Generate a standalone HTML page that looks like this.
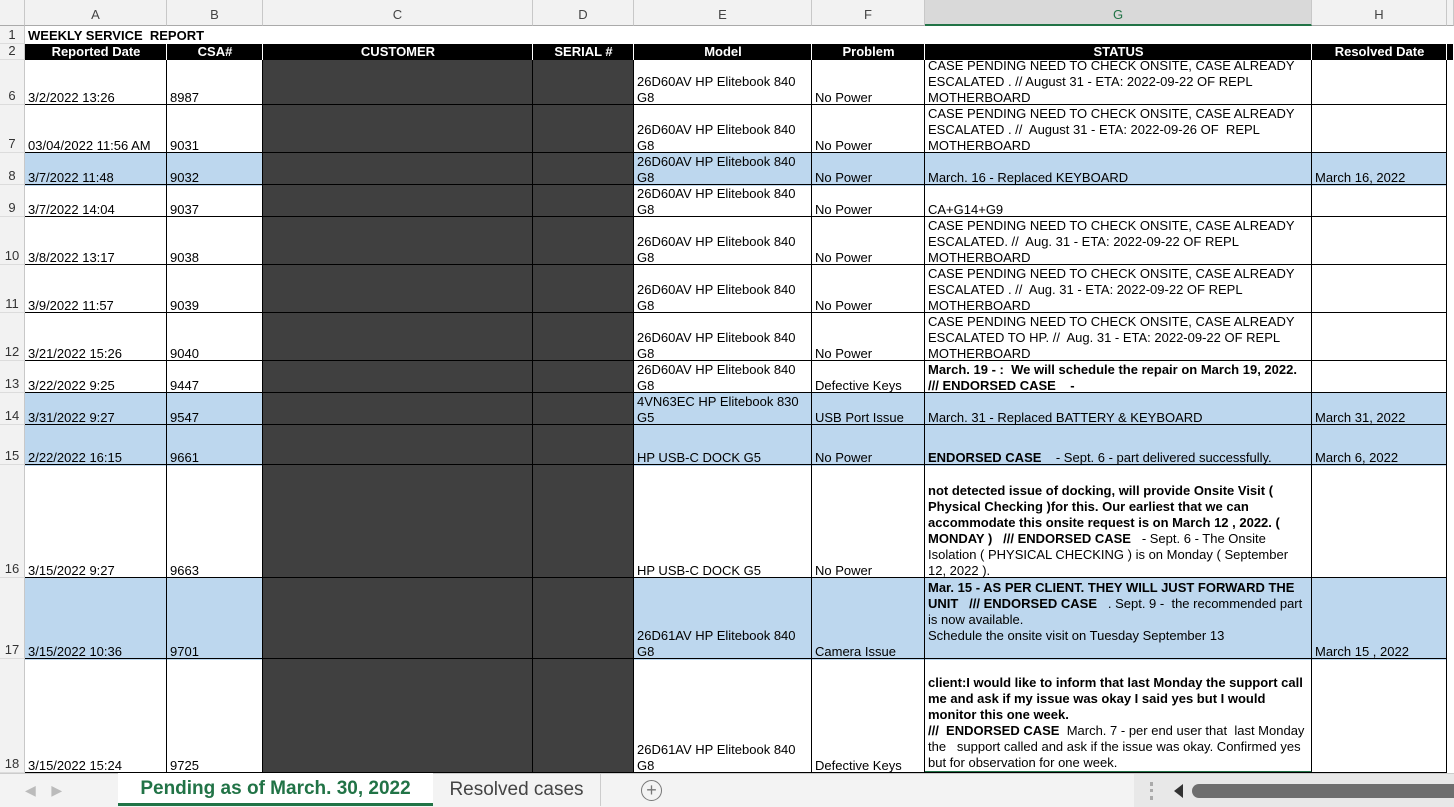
<!DOCTYPE html>
<html><head><meta charset="utf-8"><style>
*{margin:0;padding:0;box-sizing:border-box}
body{width:1454px;height:807px;overflow:hidden;background:#fff;font-family:"Liberation Sans",Arial,sans-serif;font-size:13px;color:#000;position:relative}
.r{position:absolute;left:0;width:1454px}
.r::after{content:"";position:absolute;left:25px;width:1422px;bottom:0;height:1px;background:#000;z-index:2}
.c{position:absolute;top:0;bottom:-1px;display:flex;align-items:flex-end;padding:0 2px 0 3px;line-height:16px;overflow:hidden;border-right:1px solid #000}
.n{left:0;width:25px;bottom:0;background:#f2f2f2;border-right:1px solid #c8c8c8;border-bottom:1px solid #dcdcdc;justify-content:center;color:#333;padding:0;z-index:3}
.A{left:25px;width:142px}.B{left:167px;width:96px}.C{left:263px;width:270px;background:#404040}.D{left:533px;width:101px;background:#404040}
.E{left:634px;width:178px}.F{left:812px;width:113px}.G{left:925px;width:387px}.H{left:1312px;width:135px}
.X{left:1447px;width:7px;border:none}
.blue .A,.blue .B,.blue .E,.blue .F,.blue .G,.blue .H{background:#bdd7ee}
b{font-weight:bold}
.hd{position:absolute;top:0;height:26px;background:#f2f2f2;border-right:1px solid #c8c8c8;border-bottom:1px solid #aaa;text-align:center;line-height:30px;color:#444;font-size:13px}
.blk{background:#000;color:#fff;font-weight:bold;justify-content:center;border-right:1px solid #fff;bottom:0}
</style></head><body>
<div class="hd" style="left:0;width:25px"></div>
<div class="hd" style="left:25px;width:142px">A</div>
<div class="hd" style="left:167px;width:96px">B</div>
<div class="hd" style="left:263px;width:270px">C</div>
<div class="hd" style="left:533px;width:101px">D</div>
<div class="hd" style="left:634px;width:178px">E</div>
<div class="hd" style="left:812px;width:113px">F</div>
<div class="hd" style="left:925px;width:387px;background:#d9d9d9;border-bottom:2px solid #217346;color:#217346">G</div>
<div class="hd" style="left:1312px;width:135px">H</div>
<div class="hd" style="left:1447px;width:7px"></div>

<div style="position:absolute;top:26px;left:0;width:1454px;height:18px">
<div class="c n">1</div>
<div class="c" style="left:25px;width:238px;border:none;font-weight:bold;font-size:13px;bottom:0">WEEKLY SERVICE&nbsp; REPORT</div>
</div>
<div style="position:absolute;top:44px;left:0;width:1454px;height:16px">
<div class="c n" style="line-height:16px">2</div>
<div class="c A blk">Reported Date</div><div class="c B blk">CSA#</div><div class="c C blk" style="background:#000">CUSTOMER</div><div class="c D blk" style="background:#000">SERIAL #</div><div class="c E blk">Model</div><div class="c F blk">Problem</div><div class="c G blk">STATUS</div><div class="c H blk">Resolved Date</div><div class="c X blk"></div>
</div>

<div class="r" style="top:60px;height:45px"><div class="c n">6</div><div class="c A">3/2/2022 13:26</div><div class="c B">8987</div><div class="c C"></div><div class="c D"></div><div class="c E">26D60AV HP Elitebook 840<br>G8</div><div class="c F">No Power</div><div class="c G">CASE PENDING NEED TO CHECK ONSITE, CASE ALREADY ESCALATED . // August 31 - ETA: 2022-09-22 OF REPL MOTHERBOARD</div><div class="c H"></div></div>

<div class="r" style="top:105px;height:48px"><div class="c n">7</div><div class="c A">03/04/2022 11:56 AM</div><div class="c B">9031</div><div class="c C"></div><div class="c D"></div><div class="c E">26D60AV HP Elitebook 840<br>G8</div><div class="c F">No Power</div><div class="c G">CASE PENDING NEED TO CHECK ONSITE, CASE ALREADY ESCALATED . //&nbsp; August 31 - ETA: 2022-09-26 OF&nbsp; REPL MOTHERBOARD</div><div class="c H"></div></div>

<div class="r blue" style="top:153px;height:32px"><div class="c n">8</div><div class="c A">3/7/2022 11:48</div><div class="c B">9032</div><div class="c C"></div><div class="c D"></div><div class="c E">26D60AV HP Elitebook 840<br>G8</div><div class="c F">No Power</div><div class="c G">March. 16 - Replaced KEYBOARD</div><div class="c H">March 16, 2022</div></div>

<div class="r" style="top:185px;height:32px"><div class="c n">9</div><div class="c A">3/7/2022 14:04</div><div class="c B">9037</div><div class="c C"></div><div class="c D"></div><div class="c E">26D60AV HP Elitebook 840<br>G8</div><div class="c F">No Power</div><div class="c G">CA+G14+G9</div><div class="c H"></div></div>

<div class="r" style="top:217px;height:48px"><div class="c n">10</div><div class="c A">3/8/2022 13:17</div><div class="c B">9038</div><div class="c C"></div><div class="c D"></div><div class="c E">26D60AV HP Elitebook 840<br>G8</div><div class="c F">No Power</div><div class="c G">CASE PENDING NEED TO CHECK ONSITE, CASE ALREADY ESCALATED. //&nbsp; Aug. 31 - ETA: 2022-09-22 OF REPL MOTHERBOARD</div><div class="c H"></div></div>

<div class="r" style="top:265px;height:48px"><div class="c n">11</div><div class="c A">3/9/2022 11:57</div><div class="c B">9039</div><div class="c C"></div><div class="c D"></div><div class="c E">26D60AV HP Elitebook 840<br>G8</div><div class="c F">No Power</div><div class="c G">CASE PENDING NEED TO CHECK ONSITE, CASE ALREADY ESCALATED . //&nbsp; Aug. 31 - ETA: 2022-09-22 OF REPL MOTHERBOARD</div><div class="c H"></div></div>

<div class="r" style="top:313px;height:48px"><div class="c n">12</div><div class="c A">3/21/2022 15:26</div><div class="c B">9040</div><div class="c C"></div><div class="c D"></div><div class="c E">26D60AV HP Elitebook 840<br>G8</div><div class="c F">No Power</div><div class="c G">CASE PENDING NEED TO CHECK ONSITE, CASE ALREADY ESCALATED TO HP. //&nbsp; Aug. 31 - ETA: 2022-09-22 OF REPL MOTHERBOARD</div><div class="c H"></div></div>

<div class="r" style="top:361px;height:32px"><div class="c n">13</div><div class="c A">3/22/2022 9:25</div><div class="c B">9447</div><div class="c C"></div><div class="c D"></div><div class="c E">26D60AV HP Elitebook 840<br>G8</div><div class="c F">Defective Keys</div><div class="c G"><b>March. 19 - :&nbsp; We will schedule the repair on March 19, 2022.<br>/// ENDORSED CASE&nbsp;&nbsp;&nbsp; -</b></div><div class="c H"></div></div>

<div class="r blue" style="top:393px;height:32px"><div class="c n">14</div><div class="c A">3/31/2022 9:27</div><div class="c B">9547</div><div class="c C"></div><div class="c D"></div><div class="c E">4VN63EC HP Elitebook 830<br>G5</div><div class="c F">USB Port Issue</div><div class="c G">March. 31 - Replaced BATTERY &amp; KEYBOARD</div><div class="c H">March 31, 2022</div></div>

<div class="r blue" style="top:425px;height:40px"><div class="c n">15</div><div class="c A">2/22/2022 16:15</div><div class="c B">9661</div><div class="c C"></div><div class="c D"></div><div class="c E">HP USB-C DOCK G5</div><div class="c F">No Power</div><div class="c G"><span><b>ENDORSED CASE</b>&nbsp;&nbsp;&nbsp; - Sept. 6 - part delivered successfully.</span></div><div class="c H">March 6, 2022</div></div>

<div class="r" style="top:465px;height:113px"><div class="c n">16</div><div class="c A">3/15/2022 9:27</div><div class="c B">9663</div><div class="c C"></div><div class="c D"></div><div class="c E">HP USB-C DOCK G5</div><div class="c F">No Power</div><div class="c G"><span><b>not detected issue of docking, will provide Onsite Visit ( Physical Checking )for this. Our earliest that we can accommodate this onsite request is on March 12 , 2022. ( MONDAY )&nbsp;&nbsp; /// ENDORSED CASE</b>&nbsp;&nbsp; - Sept. 6 - The Onsite Isolation ( PHYSICAL CHECKING ) is on Monday ( September 12, 2022 ).</span></div><div class="c H"></div></div>

<div class="r blue" style="top:578px;height:81px"><div class="c n">17</div><div class="c A">3/15/2022 10:36</div><div class="c B">9701</div><div class="c C"></div><div class="c D"></div><div class="c E">26D61AV HP Elitebook 840<br>G8</div><div class="c F">Camera Issue</div><div class="c G" style="align-items:flex-start;padding-top:2px"><span><b>Mar. 15 - AS PER CLIENT. THEY WILL JUST FORWARD THE UNIT&nbsp;&nbsp; /// ENDORSED CASE</b>&nbsp;&nbsp; . Sept. 9 -&nbsp; the recommended part is now available.<br>Schedule the onsite visit on Tuesday September 13</span></div><div class="c H">March 15 , 2022</div></div>

<div class="r" style="top:659px;height:114px"><div class="c n">18</div><div class="c A">3/15/2022 15:24</div><div class="c B">9725</div><div class="c C"></div><div class="c D"></div><div class="c E">26D61AV HP Elitebook 840<br>G8</div><div class="c F">Defective Keys</div><div class="c G" style="border-bottom:2px solid #217346;bottom:0"><span><b>client:I would like to inform that last Monday the support call me and ask if my issue was okay I said yes but I would monitor this one week.<br>///&nbsp; ENDORSED CASE</b>&nbsp; March. 7 - per end user that&nbsp; last Monday the&nbsp;&nbsp; support called and ask if the issue was okay. Confirmed yes but for observation for one week.</span></div><div class="c H"></div></div>

<div style="position:absolute;top:773px;left:0;width:1454px;height:34px;background:#f3f3f3;border-top:1px solid #ccc;z-index:5">
<div style="position:absolute;left:25px;top:8px;color:#bbb;font-size:14px">&#9664;&nbsp;&nbsp;&nbsp;&nbsp;&#9654;</div>
<div style="position:absolute;left:118px;top:-1px;width:315px;height:33px;background:#fff;border-bottom:3px solid #217346;color:#217346;font-weight:bold;font-size:19px;text-align:center;line-height:32px">Pending as of March. 30, 2022</div>
<div style="position:absolute;left:433px;top:0;width:168px;height:32px;color:#444;font-size:19px;text-align:center;line-height:32px;border-right:1px solid #ccc">Resolved cases</div>
<div style="position:absolute;left:641px;top:6px;width:21px;height:21px;border:1.5px solid #777;border-radius:50%;text-align:center;line-height:18px;color:#777;font-size:18px">+</div>
<div style="position:absolute;left:1134px;top:0;width:320px;height:33px;background:#e8e8e8"></div>
<div style="position:absolute;left:1150px;top:8px;width:3px;height:18px;border-left:3px dotted #aaa"></div>
<div style="position:absolute;left:1174px;top:10px;width:0;height:0;border-top:7px solid transparent;border-bottom:7px solid transparent;border-right:9px solid #333"></div>
<div style="position:absolute;left:1192px;top:10px;width:262px;height:14px;background:#6e6e6e;border-radius:7px 0 0 7px"></div>
</div>
</body></html>
